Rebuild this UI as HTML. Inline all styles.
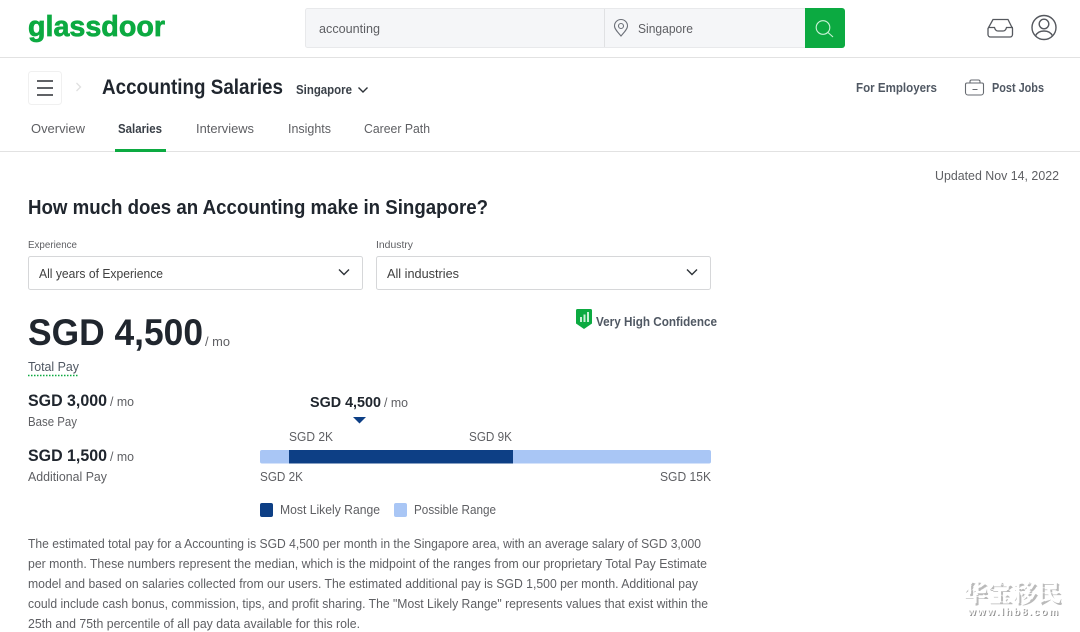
<!DOCTYPE html>
<html><head><meta charset="utf-8"><title>Accounting Salaries</title>
<style>
html,body{margin:0;padding:0;background:#fff;width:1080px;height:632px;overflow:hidden}
svg{display:block;position:absolute;left:0;top:0;filter:blur(.25px)}
text{font-family:"Liberation Sans",sans-serif;font-size:13px;fill:#5e5f63}
.b{font-weight:700}
.d{fill:#20262e}
.g{fill:#505863}
</style></head><body>
<svg width="1080" height="632" viewBox="0 0 1080 632" xmlns="http://www.w3.org/2000/svg">
<!-- header -->
<rect x="0" y="57" width="1080" height="1" fill="#e2e2e2"/>
<text x="28" y="36" class="b" style="font-size:29px;fill:#0caa41;stroke:#0caa41;stroke-width:.7" textLength="137" lengthAdjust="spacingAndGlyphs">glassdoor</text>
<rect x="305.500" y="8.500" width="505" height="39" rx="2" fill="#f5f6f8" stroke="#e8e9eb"/>
<rect x="604" y="9" width="1" height="38" fill="#e0e1e3"/>
<text x="319" y="33" textLength="61" lengthAdjust="spacingAndGlyphs">accounting</text>
<path d="M621 36c-3-3.500-6.500-7-6.500-10a6.500 6.500 0 0 1 13 0c0 3-3.500 6.500-6.500 10z" fill="none" stroke="#6c7078" stroke-width="1.100"/>
<circle cx="621" cy="26" r="2.500" fill="none" stroke="#6c7078" stroke-width="1.100"/>
<text x="638" y="33" textLength="55" lengthAdjust="spacingAndGlyphs">Singapore</text>
<path d="M805 8h37a3 3 0 0 1 3 3v34a3 3 0 0 1-3 3h-37z" fill="#0caa41"/>
<circle cx="823" cy="27.500" r="6.800" fill="none" stroke="#c9f2d6" stroke-width="1.100"/>
<path d="M828 32.500l5 4.500" stroke="#c9f2d6" stroke-width="1.100" fill="none"/>
<!-- inbox -->
<path d="M993 19.500h15l4.500 9v6a2.500 2.500 0 0 1-2.500 2.500h-19.500a2.500 2.500 0 0 1-2.500-2.500v-6z" fill="none" stroke="#55585e" stroke-width="1.300"/>
<path d="M988 27.500h6.500c.5 2 1.500 3.500 3.500 3.500h5c2 0 3-1.500 3.500-3.500h6.500" fill="none" stroke="#55585e" stroke-width="1.300"/>
<!-- user -->
<circle cx="1044" cy="27.500" r="12" fill="none" stroke="#55585e" stroke-width="1.400"/>
<circle cx="1044" cy="24" r="4.800" fill="none" stroke="#55585e" stroke-width="1.400"/>
<path d="M1035.500 36c1.500-3.500 4.500-5 8.500-5s7 1.500 8.500 5" fill="none" stroke="#55585e" stroke-width="1.400"/>
<!-- sub nav -->
<rect x="28.500" y="71.500" width="33" height="33" rx="3" fill="#fff" stroke="#f0f0f0"/>
<path d="M37 81h16M37 88h16M37 95h16" stroke="#606266" stroke-width="2" fill="none"/>
<path d="M76.500 83l4 4-4 4" stroke="#e0e0e0" stroke-width="1.300" fill="none"/>
<text x="102" y="94" class="b d" style="font-size:21px" textLength="181" lengthAdjust="spacingAndGlyphs">Accounting Salaries</text>
<text x="296" y="94" class="b" style="fill:#3a4048" textLength="56" lengthAdjust="spacingAndGlyphs">Singapore</text>
<path d="M358.500 87.500l4.500 4.500 4.500-4.500" stroke="#2d3238" stroke-width="1.400" fill="none"/>
<text x="856" y="92" class="b g" textLength="81" lengthAdjust="spacingAndGlyphs">For Employers</text>
<path d="M970 83v-1.500a1.500 1.500 0 0 1 1.500-1.500h7a1.500 1.500 0 0 1 1.500 1.500v1.500M968 83h14a1.500 1.500 0 0 1 1.500 1.500v8a2.500 2.500 0 0 1-2.500 2.500h-13a2.500 2.500 0 0 1-2.500-2.500v-8a1.500 1.500 0 0 1 1.500-1.500zM972.500 89.500h5" fill="none" stroke="#666a70" stroke-width="1.100"/>
<text x="992" y="92" class="b g" textLength="52" lengthAdjust="spacingAndGlyphs">Post Jobs</text>
<!-- tabs -->
<text x="31" y="133" textLength="54" lengthAdjust="spacingAndGlyphs">Overview</text>
<text x="118" y="133" class="b" style="fill:#3a4048" textLength="44" lengthAdjust="spacingAndGlyphs">Salaries</text>
<text x="196" y="133" textLength="58" lengthAdjust="spacingAndGlyphs">Interviews</text>
<text x="288" y="133" textLength="43" lengthAdjust="spacingAndGlyphs">Insights</text>
<text x="364" y="133" textLength="66" lengthAdjust="spacingAndGlyphs">Career Path</text>
<rect x="0" y="151" width="1080" height="1" fill="#e2e2e2"/>
<rect x="115" y="149" width="51" height="3" fill="#0caa41"/>
<text x="935" y="180" textLength="124" lengthAdjust="spacingAndGlyphs">Updated Nov 14, 2022</text>
<!-- heading -->
<text x="28" y="214" class="b d" style="font-size:20px" textLength="460" lengthAdjust="spacingAndGlyphs">How much does an Accounting make in Singapore?</text>
<text x="28" y="248" style="font-size:10.500px" textLength="49" lengthAdjust="spacingAndGlyphs">Experience</text>
<text x="376" y="248" style="font-size:10.500px" textLength="37" lengthAdjust="spacingAndGlyphs">Industry</text>
<rect x="28.500" y="256.500" width="334" height="33" rx="2" fill="#fff" stroke="#d6d7d9"/>
<rect x="376.500" y="256.500" width="334" height="33" rx="2" fill="#fff" stroke="#d6d7d9"/>
<text x="39" y="278" style="fill:#404040" textLength="124" lengthAdjust="spacingAndGlyphs">All years of Experience</text>
<text x="387" y="278" style="fill:#404040" textLength="72" lengthAdjust="spacingAndGlyphs">All industries</text>
<path d="M339 269.500l5 5 5-5M687 269.500l5 5 5-5" stroke="#2d3238" stroke-width="1.400" fill="none"/>
<!-- pay -->
<text x="28" y="345" class="b d" style="font-size:37px" textLength="175" lengthAdjust="spacingAndGlyphs">SGD 4,500</text>
<text x="205" y="346" textLength="25" lengthAdjust="spacingAndGlyphs">/ mo</text>
<text x="28" y="371" style="fill:#505863" textLength="51" lengthAdjust="spacingAndGlyphs">Total Pay</text>
<path d="M28 375.500h51" stroke="#0caa41" stroke-width="1.500" stroke-dasharray="1.500 1.500" fill="none"/>
<text x="28" y="406" class="b d" style="font-size:17px" textLength="79" lengthAdjust="spacingAndGlyphs">SGD 3,000</text>
<text x="110" y="406" textLength="24" lengthAdjust="spacingAndGlyphs">/ mo</text>
<text x="28" y="426" textLength="49" lengthAdjust="spacingAndGlyphs">Base Pay</text>
<text x="28" y="461" class="b d" style="font-size:17px" textLength="79" lengthAdjust="spacingAndGlyphs">SGD 1,500</text>
<text x="110" y="461" textLength="24" lengthAdjust="spacingAndGlyphs">/ mo</text>
<text x="28" y="481" textLength="79" lengthAdjust="spacingAndGlyphs">Additional Pay</text>
<!-- confidence -->
<path d="M576 310.500a1.500 1.500 0 0 1 1.500-1.500h13a1.500 1.500 0 0 1 1.500 1.500v13l-8 5.500-8-5.500z" fill="#0caa41"/>
<path d="M580 317h2v5h-2zM583.500 314.500h2v7.500h-2zM587 312h2v10h-2z" fill="#c9f0d6"/>
<text x="596" y="326" class="b g" textLength="121" lengthAdjust="spacingAndGlyphs">Very High Confidence</text>
<!-- chart -->
<text x="310" y="407" class="b d" style="font-size:15px" textLength="71" lengthAdjust="spacingAndGlyphs">SGD 4,500</text>
<text x="384" y="407" textLength="24" lengthAdjust="spacingAndGlyphs">/ mo</text>
<path d="M353 417h13l-6.500 6.500z" fill="#0d3f85"/>
<text x="289" y="441" textLength="44" lengthAdjust="spacingAndGlyphs">SGD 2K</text>
<text x="469" y="441" textLength="43" lengthAdjust="spacingAndGlyphs">SGD 9K</text>
<rect x="260" y="450" width="451" height="13.500" rx="2" fill="#a9c6f5"/>
<rect x="289" y="450" width="224" height="13.500" fill="#0d3f85"/>
<text x="260" y="481" textLength="43" lengthAdjust="spacingAndGlyphs">SGD 2K</text>
<text x="660" y="481" textLength="51" lengthAdjust="spacingAndGlyphs">SGD 15K</text>
<rect x="260" y="503" width="13" height="14" rx="2" fill="#0d3f85"/>
<text x="280" y="514" textLength="100" lengthAdjust="spacingAndGlyphs">Most Likely Range</text>
<rect x="394" y="503" width="13" height="14" rx="2" fill="#a9c6f5"/>
<text x="414" y="514" textLength="82" lengthAdjust="spacingAndGlyphs">Possible Range</text>
<!-- paragraph -->
<text x="28" y="548" textLength="673" lengthAdjust="spacingAndGlyphs">The estimated total pay for a Accounting is SGD 4,500 per month in the Singapore area, with an average salary of SGD 3,000</text>
<text x="28" y="568" textLength="679" lengthAdjust="spacingAndGlyphs">per month. These numbers represent the median, which is the midpoint of the ranges from our proprietary Total Pay Estimate</text>
<text x="28" y="588" textLength="670" lengthAdjust="spacingAndGlyphs">model and based on salaries collected from our users. The estimated additional pay is SGD 1,500 per month. Additional pay</text>
<text x="28" y="608" textLength="680" lengthAdjust="spacingAndGlyphs">could include cash bonus, commission, tips, and profit sharing. The "Most Likely Range" represents values that exist within the</text>
<text x="28" y="628" textLength="332" lengthAdjust="spacingAndGlyphs">25th and 75th percentile of all pay data available for this role.</text>
<!-- watermark -->
<g>
<text x="963" y="601" class="b" style="font-family:'Liberation Serif','Noto Serif CJK SC',serif;font-size:24px;fill:#8c8c8c;opacity:.6" transform="translate(2,2)" textLength="98">华宝移民</text>
<text x="963" y="601" class="b" style="font-family:'Liberation Serif','Noto Serif CJK SC',serif;font-size:24px;fill:#fff" textLength="98">华宝移民</text>
<text x="968" y="615" class="b" style="font-size:10px;fill:#777;opacity:.8" transform="translate(1,1)" textLength="90">www.lhb8.com</text>
<text x="968" y="615" class="b" style="font-size:10px;fill:#fff" textLength="90">www.lhb8.com</text>
</g>
</svg>
</body></html>
